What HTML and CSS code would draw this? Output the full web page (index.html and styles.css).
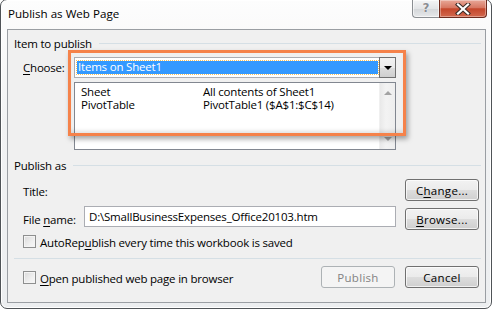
FILE: index.html
```html
<!DOCTYPE html>
<html lang="en">
<head>
    <meta charset="UTF-8">
    <title>Publish as Web Page</title>
    <link rel="stylesheet" href="styles.css">
</head>
<body>
    <div class="window">
        <div class="titlebar">
            <span class="title">Publish as Web Page</span>
            <div class="caption-btns">
                <div class="cap-help">?</div>
                <div class="cap-close">
                    <svg width="16" height="12" viewBox="0 0 16 12">
                        <path d="M3 1.5 L13 10.5 M13 1.5 L3 10.5" stroke="#3a2b26" stroke-width="4.2" stroke-linecap="square"/>
                        <path d="M3 1.5 L13 10.5 M13 1.5 L3 10.5" stroke="#ffffff" stroke-width="2.2" stroke-linecap="square"/>
                    </svg>
                </div>
            </div>
        </div>

        <div class="client">
            <div class="group-head"><span>Item to publish</span><div class="rule"></div></div>

            <div class="choose-row">
                <label class="label choose-label"><u>C</u>hoose:</label>
                <div class="picker">
                    <div class="combo">
                        <div class="combo-value"><span>Items on Sheet1</span></div>
                        <div class="combo-btn"><span class="tri-down"></span></div>
                    </div>
                    <div class="listbox">
                        <div class="list-items">
                            <div class="list-row"><span class="col-type">Sheet</span><span>All contents of Sheet1</span></div>
                            <div class="list-row"><span class="col-type">PivotTable</span><span>PivotTable1 ($A$1:$C$14)</span></div>
                        </div>
                        <div class="scrollbar">
                            <span class="arrow-up"></span>
                            <span class="arrow-down"></span>
                        </div>
                    </div>
                </div>
            </div>

            <!-- callout drawn over the picker -->
            <div class="highlight"></div>

            <div class="group-head publish-head"><span>Publish as</span><div class="rule"></div></div>

            <div class="form-row title-row">
                <span class="label title-label">Title:</span>
                <button class="btn">C<u>h</u>ange...</button>
            </div>

            <div class="form-row file-row">
                <span class="label file-label">File <u>n</u>ame:</span>
                <div class="textbox">D:\SmallBusinessExpenses_Office20103.htm</div>
                <button class="btn browse-btn"><u>B</u>rowse...</button>
            </div>

            <div class="check-row">
                <span class="checkbox"></span>
                <span>AutoRep<u>u</u>blish every time this workbook is saved</span>
            </div>

            <div class="separator"></div>

            <div class="bottom-row">
                <div class="check-row open-check">
                    <span class="checkbox"></span>
                    <span><u>O</u>pen published web page in browser</span>
                </div>
                <div class="actions">
                    <button class="btn btn-disabled">Publish</button>
                    <button class="btn">Cancel</button>
                </div>
            </div>
        </div>
    </div>
</body>
</html>
```

FILE: styles.css
```css
* {
    margin: 0;
    padding: 0;
    box-sizing: border-box;
}

body {
    font-family: "Open Sans", "Noto Sans", sans-serif;
    font-size: 11.5px;
    letter-spacing: -0.2px;
    color: #000;
    background: #fff;
    width: 494px;
    height: 310px;
    overflow: hidden;
}

u {
    text-decoration: underline;
    text-underline-offset: 2px;
}

.window {
    width: 492px;
    height: 310px;
    margin-top: -1px;
    border: 1px solid #4f5357;
    border-radius: 7px;
    background: linear-gradient(180deg, #fdfdfd 0%, #f1f2f3 40%, #eceef0 100%);
    box-shadow: inset 0 0 0 1px #ffffff;
    padding: 0 5px 5px 6px;
    display: flex;
    flex-direction: column;
}

/* title bar */

.titlebar {
    height: 29px;
    display: flex;
    align-items: flex-start;
    justify-content: space-between;
}

.title {
    font-size: 11.6px;
    letter-spacing: 0;
    padding: 6px 0 0 1px;
    color: #000;
}

.caption-btns {
    display: flex;
    margin-right: -1px;
}

.cap-help {
    width: 27px;
    height: 18px;
    border: 1px solid #8a8e92;
    border-top: none;
    border-right: none;
    border-radius: 0 0 0 4px;
    background: linear-gradient(180deg, #f4f5f6 0%, #e3e5e7 50%, #d3d6d9 51%, #e6e8ea 100%);
    box-shadow: inset 0 0 0 1px rgba(255, 255, 255, 0.6);
    color: #8a8d91;
    font-family: "DejaVu Sans", sans-serif;
    font-size: 12px;
    font-weight: bold;
    text-align: center;
    line-height: 17px;
    text-shadow: 0 0 1px #fff, 0 0 1px #fff;
}

.cap-close {
    width: 48px;
    height: 18px;
    border: 1px solid #6d2b1f;
    border-top: none;
    border-radius: 0 0 4px 0;
    background: linear-gradient(180deg, #e8a898 0%, #d77762 45%, #c4462b 52%, #d2694f 100%);
    box-shadow: inset 0 0 0 1px rgba(255, 255, 255, 0.35);
    display: flex;
    align-items: center;
    justify-content: center;
}

/* client area */

.client {
    position: relative;
    height: 274px;
    border: 1px solid #9a9ea3;
    background: #f0f0f0;
    display: flex;
    flex-direction: column;
}

.group-head {
    display: flex;
    align-items: center;
    height: 14px;
    margin-top: 7px;
    padding: 0 4px 0 6px;
    line-height: 14px;
}

.group-head .rule {
    flex: 1;
    height: 1px;
    margin-left: 7px;
    margin-top: -1px;
    background: #d5dfe5;
}

.publish-head {
    margin-top: 9px;
}

.label {
    padding-left: 15px;
}

.choose-row {
    display: flex;
    margin-top: 6px;
}

.choose-label {
    width: 66px;
    padding-top: 3px;
}

.picker {
    width: 322px;
}

.combo {
    height: 21px;
    display: flex;
    border: 1px solid #abadb3;
    background: #fff;
}

.combo-value {
    flex: 1;
    padding: 3px 1px 2px 2px;
}

.combo-value span {
    display: block;
    height: 13px;
    line-height: 12px;
    background: #3399ff;
    color: #fff;
    padding-left: 1px;
    outline: 1px dotted #f8c25a;
}

.combo-btn {
    width: 17px;
    margin: -1px -1px -1px 0;
    border: 1px solid #707070;
    background: linear-gradient(180deg, #f2f2f2 0%, #ebebeb 50%, #dddddd 51%, #cfcfcf 100%);
    display: flex;
    align-items: center;
    justify-content: center;
}

.tri-down {
    width: 0;
    height: 0;
    border-left: 4px solid transparent;
    border-right: 4px solid transparent;
    border-top: 4px solid #000;
}

.listbox {
    height: 68px;
    margin-top: 4px;
    border: 1px solid #828790;
    background: #fff;
    display: flex;
}

.list-items {
    flex: 1;
    padding: 2px 0 0 6px;
    line-height: 13px;
}

.list-row {
    display: flex;
    height: 13px;
}

.col-type {
    width: 122px;
}

.scrollbar {
    width: 16px;
    background: linear-gradient(90deg, #e9e9e9, #f3f3f3 40%, #eeeeee);
    border-left: 1px solid #f0f0f0;
    display: flex;
    flex-direction: column;
    justify-content: space-between;
    align-items: center;
    padding: 8px 0 8px;
}

.arrow-up,
.arrow-down {
    width: 0;
    height: 0;
    border-left: 4px solid transparent;
    border-right: 4px solid transparent;
}

.arrow-up {
    border-bottom: 4px solid #a3a3a3;
}

.arrow-down {
    border-top: 4px solid #a3a3a3;
}

.highlight {
    position: absolute;
    left: 60px;
    top: 20px;
    width: 338px;
    height: 86px;
    border: 3px solid #f5824a;
    box-shadow: 2px 3px 5px rgba(0, 0, 0, 0.35), inset 0 -4px 4px -2px rgba(0, 0, 0, 0.12);
    pointer-events: none;
}

.form-row {
    display: flex;
    align-items: center;
    padding-right: 6px;
}

.title-row {
    margin-top: 6px;
    justify-content: space-between;
}

.title-label {
    padding-top: 3px;
}

.file-row {
    margin-top: 5px;
    align-items: flex-start;
}

.file-label {
    width: 76px;
    padding-top: 6px;
}

.textbox {
    width: 312px;
    height: 21px;
    border: 1px solid #abadb3;
    background: #fff;
    padding: 2px 0 0 4px;
}

.browse-btn {
    margin-top: 2px;
    margin-left: auto;
}

.btn {
    width: 74px;
    height: 22px;
    font-family: inherit;
    font-size: 11.5px;
    color: #000;
    border: 1px solid #707070;
    border-radius: 3px;
    background: linear-gradient(180deg, #f2f2f2 0%, #ebebeb 50%, #dddddd 51%, #cfcfcf 100%);
    box-shadow: inset 0 0 0 1px rgba(255, 255, 255, 0.7);
    letter-spacing: 0.3px;
}

.btn-disabled {
    color: #838383;
    border-color: #adb2b5;
    background: #f4f4f4;
    box-shadow: none;
}

.check-row {
    display: flex;
    align-items: center;
    gap: 4px;
    padding-left: 15px;
    margin-top: 5px;
    height: 13px;
}

.check-row > span:last-child {
    padding-top: 2px;
}

.checkbox {
    width: 13px;
    height: 13px;
    border: 1px solid #8e8f8f;
    background: linear-gradient(135deg, #d9d9d9 0%, #efefef 60%, #f8f8f8 100%);
    box-shadow: inset 0 0 0 1px #f4f4f4;
}

.separator {
    height: 1px;
    margin: 10px 4px 0 6px;
    background: #d5dfe5;
}

.bottom-row {
    display: flex;
    align-items: center;
    justify-content: space-between;
    margin-top: 7px;
    padding-right: 6px;
}

.open-check {
    margin-top: 1px;
}

.actions {
    display: flex;
    gap: 10px;
}
```
